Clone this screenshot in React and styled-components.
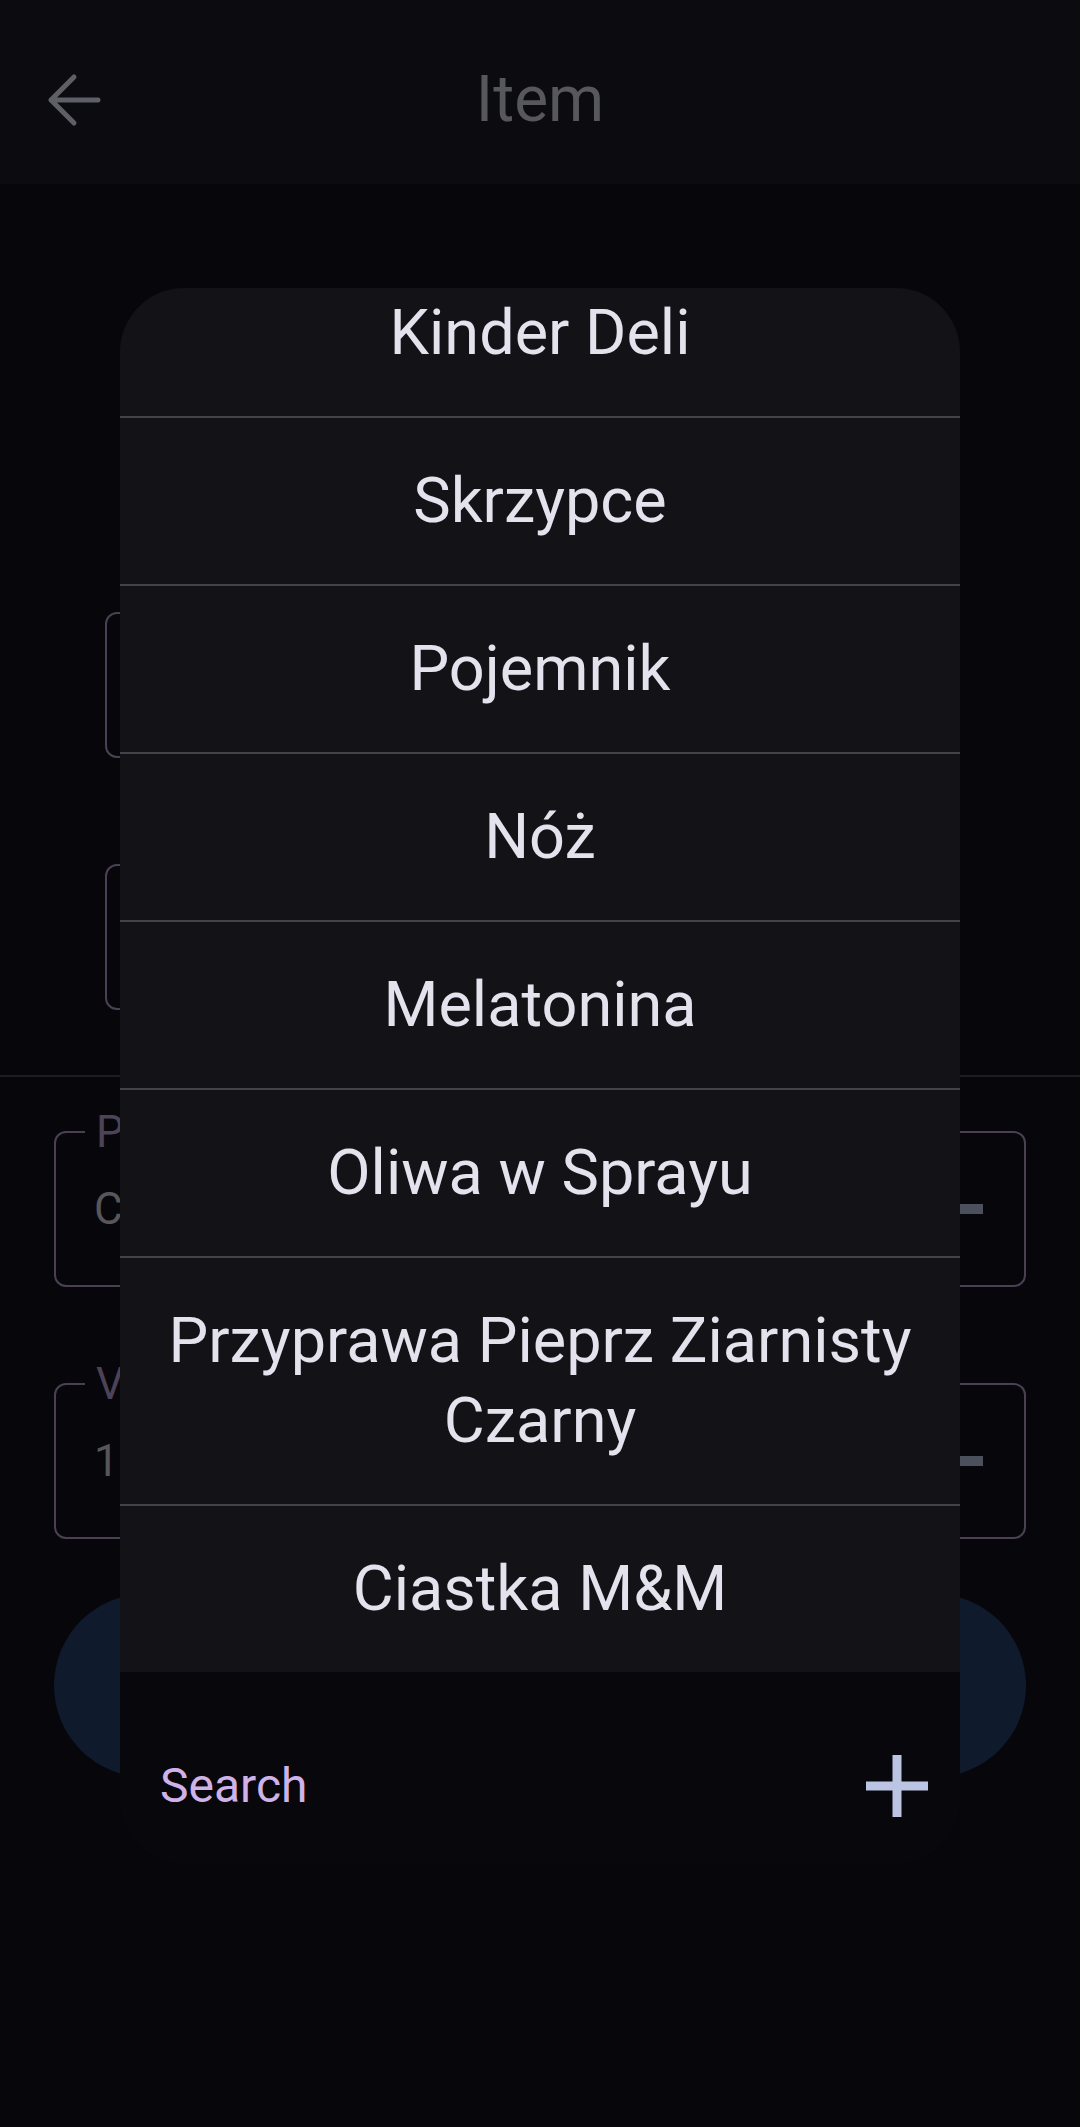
import React from "react";
import styled, { createGlobalStyle } from "styled-components";

const GlobalStyle = createGlobalStyle`
  html, body {
    margin: 0;
    padding: 0;
    background: #07070b;
  }
  body {
    font-family: Roboto, "Noto Sans", "Liberation Sans", sans-serif;
  }
  * { box-sizing: border-box; }
`;

const Page = styled.div`
  position: relative;
  width: 1080px;
  height: 2127px;
  background: #07070b;
  overflow: hidden;
`;

const Header = styled.header`
  height: 184px;
  padding-top: 16px;
  background: #0b0b10;
  display: grid;
  grid-template-columns: 1fr auto 1fr;
  align-items: center;
`;

const BackButton = styled.button`
  justify-self: start;
  margin-left: 46px;
  width: 56px;
  height: 56px;
  padding: 0;
  border: none;
  background: transparent;
  display: flex;
  align-items: center;
  justify-content: center;
`;

const Title = styled.h1`
  margin: 0;
  font-size: 64px;
  line-height: 64px;
  font-weight: 400;
  color: #57575e;
`;

const TopForm = styled.section`
  display: flex;
  flex-direction: column;
  gap: 106px;
  padding: 428px 0 65px 105px;
`;

const GhostField = styled.div`
  width: 800px;
  height: 146px;
  border: 2px solid #4a4054;
  border-radius: 12px;
`;

const Separator = styled.hr`
  margin: 0;
  height: 2px;
  border: none;
  background: #1c1c22;
`;

const BottomForm = styled.section`
  display: flex;
  flex-direction: column;
  padding: 54px 54px 0;
`;

const Field = styled.div`
  position: relative;
  height: 156px;
  margin-top: ${(p) => p.$gap || 0}px;
  border: 2px solid #4a4054;
  border-radius: 12px;
  display: flex;
  align-items: center;
  padding: 0 41px 0 38px;
`;

const FieldLabel = styled.span`
  position: absolute;
  top: -23px;
  left: 29px;
  padding: 0 11px;
  background: #07070b;
  font-size: 44px;
  line-height: 44px;
  color: #4d4357;
`;

const FieldValue = styled.span`
  flex: 1;
  font-size: 44px;
  line-height: 52px;
  color: #56565c;
`;

const Trailing = styled.span`
  width: 44px;
  height: 10px;
  background: #4b505c;
`;

const PillButton = styled.button`
  margin-top: 55px;
  height: 183px;
  border: none;
  border-radius: 92px;
  background: #101a2d;
`;

const Sheet = styled.div`
  position: absolute;
  top: 288px;
  left: 120px;
  width: 840px;
  display: flex;
  flex-direction: column;
`;

const ListViewport = styled.div`
  height: 1384px;
  overflow: hidden;
  background: #121217;
  border-radius: 64px 64px 0 0;
`;

const List = styled.ul`
  list-style: none;
  margin: -38px 0 0;
  padding: 0;
`;

const Item = styled.li`
  padding: 43px 30px;
  text-align: center;
  font-size: 63px;
  line-height: 80px;
  color: #e3e2ed;
  border-bottom: 2px solid #434349;
  &:last-child {
    border-bottom: none;
  }
`;

const Footer = styled.div`
  height: 192px;
  padding: 36px 32px 0 40px;
  background: #08080c;
  border-radius: 0 0 64px 64px;
  display: flex;
  align-items: center;
  justify-content: space-between;
`;

const SearchInput = styled.input`
  flex: 1;
  min-width: 0;
  border: none;
  outline: none;
  background: transparent;
  padding: 0;
  font-family: inherit;
  font-size: 48px;
  line-height: 58px;
  color: #cfb3e8;
  &::placeholder {
    color: #cfb3e8;
    opacity: 1;
  }
`;

const AddButton = styled.button`
  width: 62px;
  height: 62px;
  padding: 0;
  border: none;
  background: transparent;
  display: flex;
`;

const items = [
  "Kinder Deli",
  "Skrzypce",
  "Pojemnik",
  "Nóż",
  "Melatonina",
  "Oliwa w Sprayu",
  "Przyprawa Pieprz Ziarnisty Czarny",
  "Ciastka M&M",
];

export default function App() {
  return (
    <>
      <GlobalStyle />
      <Page>
        <Header>
          <BackButton aria-label="Back">
            <svg width="56" height="56" viewBox="0 0 56 56" fill="none">
              <path
                d="M52 28H5M28 5L5 28L28 51"
                stroke="#5f5f67"
                strokeWidth="5"
                strokeLinecap="round"
                strokeLinejoin="round"
              />
            </svg>
          </BackButton>
          <Title>Item</Title>
          <span />
        </Header>

        <TopForm>
          <GhostField />
          <GhostField />
        </TopForm>
        <Separator />
        <BottomForm>
          <Field>
            <FieldLabel>P</FieldLabel>
            <FieldValue>C</FieldValue>
            <Trailing />
          </Field>
          <Field $gap={96}>
            <FieldLabel>V</FieldLabel>
            <FieldValue>1</FieldValue>
            <Trailing />
          </Field>
          <PillButton aria-label="Save" />
        </BottomForm>

        <Sheet>
          <ListViewport>
            <List>
              {items.map((name) => (
                <Item key={name}>{name}</Item>
              ))}
            </List>
          </ListViewport>
          <Footer>
            <SearchInput placeholder="Search" />
            <AddButton aria-label="Add">
              <svg width="62" height="62" viewBox="0 0 62 62">
                <rect x="26.5" y="0" width="9" height="62" fill="#bcc4e4" />
                <rect x="0" y="26.5" width="62" height="9" fill="#bcc4e4" />
              </svg>
            </AddButton>
          </Footer>
        </Sheet>
      </Page>
    </>
  );
}
